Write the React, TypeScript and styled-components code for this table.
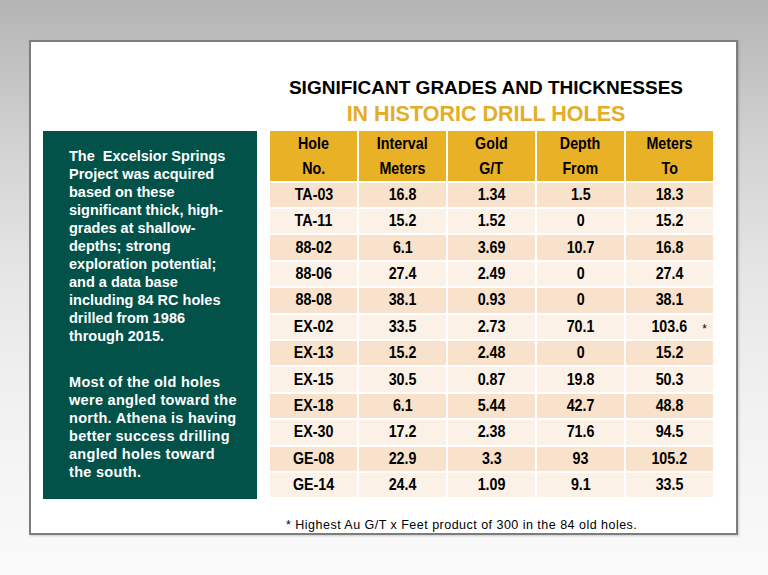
import React from "react";
import styled, { createGlobalStyle } from "styled-components";

const GlobalStyle = createGlobalStyle`
  html, body {
    margin: 0;
    padding: 0;
  }
  body {
    min-height: 575px;
    background: linear-gradient(180deg, #b4b4b4 0%, #d2d2d2 25%, #e6e6e6 48%, #f1f1f1 70%, #fafafa 100%);
    font-family: "Liberation Sans", Arial, sans-serif;
  }
`;

const Slide = styled.div`
  width: 768px;
  height: 575px;
  padding: 40px 0 0 29px;
  box-sizing: border-box;
`;

const Frame = styled.div`
  width: 709px;
  height: 495px;
  box-sizing: border-box;
  background: #ffffff;
  border: 2px solid #7d7d7d;
  box-shadow: 1px 1px 2px rgba(0, 0, 0, 0.18);
  padding: 36px 0 0 12px;
  display: grid;
  grid-template-columns: 214px 443px;
  grid-template-rows: auto auto auto;
  column-gap: 13px;
`;

const TitleBlock = styled.div`
  grid-column: 2;
  display: flex;
  flex-direction: column;
  align-items: center;
  padding-right: 11px;
  margin-bottom: 4px;
`;

const Title = styled.div<{ $gold?: boolean }>`
  font-family: "Liberation Sans", Arial, sans-serif;
  font-weight: 700;
  white-space: nowrap;
  color: ${(p) => (p.$gold ? "#e4ad27" : "#000000")};
  font-size: ${(p) => (p.$gold ? "21.5px" : "19px")};
  line-height: ${(p) => (p.$gold ? "24px" : "20px")};
  margin-top: ${(p) => (p.$gold ? "4px" : "0")};
`;

const Panel = styled.div`
  grid-column: 1;
  height: 368px;
  background: #02524a;
  box-sizing: border-box;
  padding: 16px 0 0 26px;
  color: #ffffff;
  font-family: "Liberation Sans", Arial, sans-serif;
  font-weight: 700;
  font-size: 14.5px;
  line-height: 18px;
`;

const Para = styled.p<{ $spaced?: boolean }>`
  margin: 0;
  white-space: nowrap;
  letter-spacing: ${(p) => (p.$spaced ? "0.3px" : "0")};
  & + & {
    margin-top: 28px;
  }
`;

const Table = styled.div`
  grid-column: 2;
  display: grid;
  grid-template-columns: repeat(5, 87px);
  grid-template-rows: 50px;
  grid-auto-rows: 24.4px;
  gap: 2px;
  align-self: start;
`;

const HeadCell = styled.div`
  background: #e8b126;
  display: flex;
  flex-direction: column;
  align-items: center;
  justify-content: center;
  line-height: 25px;
`;

const Cell = styled.div<{ $alt: boolean }>`
  position: relative;
  background: ${(p) => (p.$alt ? "#fcf1e6" : "#f8e2cb")};
  display: flex;
  align-items: center;
  justify-content: center;
`;

const Narrow = styled.span`
  display: inline-block;
  font-family: "Liberation Sans", Arial, sans-serif;
  font-weight: 700;
  font-size: 17px;
  color: #000000;
  white-space: nowrap;
  transform: scaleX(0.84);
`;

const Marker = styled.span`
  position: absolute;
  right: 6px;
  top: 8px;
  font-family: "Liberation Sans", Arial, sans-serif;
  font-weight: 400;
  font-size: 12px;
  line-height: 1;
`;

const Footnote = styled.div`
  grid-column: 2;
  margin-top: 19px;
  padding-left: 16px;
  display: flex;
  gap: 4px;
  font-family: "Liberation Sans", Arial, sans-serif;
  font-size: 12.5px;
  line-height: 14px;
  letter-spacing: 0.48px;
  color: #000000;
  white-space: nowrap;
`;

const headers: [string, string][] = [
  ["Hole", "No."],
  ["Interval", "Meters"],
  ["Gold", "G/T"],
  ["Depth", "From"],
  ["Meters", "To"],
];

const rows: string[][] = [
  ["TA-03", "16.8", "1.34", "1.5", "18.3"],
  ["TA-11", "15.2", "1.52", "0", "15.2"],
  ["88-02", "6.1", "3.69", "10.7", "16.8"],
  ["88-06", "27.4", "2.49", "0", "27.4"],
  ["88-08", "38.1", "0.93", "0", "38.1"],
  ["EX-02", "33.5", "2.73", "70.1", "103.6"],
  ["EX-13", "15.2", "2.48", "0", "15.2"],
  ["EX-15", "30.5", "0.87", "19.8", "50.3"],
  ["EX-18", "6.1", "5.44", "42.7", "48.8"],
  ["EX-30", "17.2", "2.38", "71.6", "94.5"],
  ["GE-08", "22.9", "3.3", "93", "105.2"],
  ["GE-14", "24.4", "1.09", "9.1", "33.5"],
];

const para1 = [
  "The\u00a0 Excelsior Springs",
  "Project was acquired",
  "based on these",
  "significant thick, high-",
  "grades at shallow-",
  "depths; strong",
  "exploration potential;",
  "and a data base",
  "including 84 RC holes",
  "drilled from 1986",
  "through 2015.",
];

const para2 = [
  "Most of the old holes",
  "were angled toward the",
  "north. Athena is having",
  "better success drilling",
  "angled holes toward",
  "the south.",
];

const Lines: React.FC<{ lines: string[] }> = ({ lines }) => (
  <>
    {lines.map((l, i) => (
      <React.Fragment key={i}>
        {l}
        {i < lines.length - 1 && <br />}
      </React.Fragment>
    ))}
  </>
);

export default function App() {
  return (
    <>
      <GlobalStyle />
      <Slide>
        <Frame>
          <TitleBlock>
            <Title>SIGNIFICANT GRADES AND THICKNESSES</Title>
            <Title $gold>IN HISTORIC DRILL HOLES</Title>
          </TitleBlock>
          <Panel>
            <Para>
              <Lines lines={para1} />
            </Para>
            <Para $spaced>
              <Lines lines={para2} />
            </Para>
          </Panel>
          <Table>
            {headers.map(([a, b]) => (
              <HeadCell key={a + b}>
                <Narrow>{a}</Narrow>
                <Narrow>{b}</Narrow>
              </HeadCell>
            ))}
            {rows.map((r, ri) =>
              r.map((v, ci) => (
                <Cell key={`${ri}-${ci}`} $alt={ri % 2 === 1}>
                  <Narrow>{v}</Narrow>
                  {ri === 5 && ci === 4 && <Marker>*</Marker>}
                </Cell>
              ))
            )}
          </Table>
          <Footnote>
            <span>*</span>
            <span>Highest Au G/T x Feet product of 300 in the 84 old holes.</span>
          </Footnote>
        </Frame>
      </Slide>
    </>
  );
}
